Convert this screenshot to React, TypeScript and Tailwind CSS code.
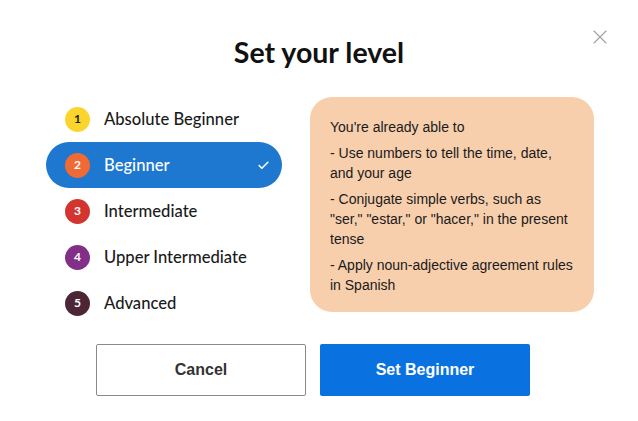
import { Check, X } from "lucide-react";

const levels = [
  { n: 1, name: "Absolute Beginner", color: "bg-[#fbd52e]", numColor: "text-[#222]" },
  { n: 2, name: "Beginner", color: "bg-[#f06a35]", numColor: "text-white" },
  { n: 3, name: "Intermediate", color: "bg-[#d2352f]", numColor: "text-white" },
  { n: 4, name: "Upper Intermediate", color: "bg-[#822f87]", numColor: "text-white" },
  { n: 5, name: "Advanced", color: "bg-[#4d2636]", numColor: "text-white" },
];

// lines kept as in the design
const skills = [
  ["- Use numbers to tell the time, date,", "and your age"],
  ['- Conjugate simple verbs, such as', '"ser," "estar," or "hacer," in the present', "tense"],
  ["- Apply noun-adjective agreement rules", "in Spanish"],
];

const selected = 2;

const App = () => {
  return (
    <div className="relative w-[638px] h-[421px] bg-white overflow-hidden">
      {/* close button */}
      <button className="absolute right-[26px] top-[25px] text-[#a0a0a0]">
        <X size={24} strokeWidth={1.1} />
      </button>

      <h1 className="pt-[34px] text-center text-[28.5px] leading-[36px] font-bold text-[#111] font-['Lato',sans-serif]">
        Set your level
      </h1>

      <div className="flex gap-[28px] pl-[46px] mt-[26px]">
        {/* level list */}
        <ul className="w-[236px] flex flex-col font-['Lato',sans-serif]">
          {levels.map((l) => {
            const active = l.n === selected;
            return (
              <li
                key={l.n}
                className={
                  active
                    ? "h-[46px] flex items-center pl-[19px] pr-[12px] rounded-full bg-[#1e78d0] text-white"
                    : "h-[46px] flex items-center pl-[19px] pr-[12px] text-[#1a1a1a]"
                }
              >
                <span
                  className={`w-[25px] h-[25px] rounded-full flex items-center justify-center text-[12px] font-bold ${l.color} ${l.numColor}`}
                >
                  {l.n}
                </span>
                <span className="ml-[14px] text-[16.6px] font-medium flex-1">{l.name}</span>
                {active && <Check size={13} strokeWidth={3} className="text-white" />}
              </li>
            );
          })}
        </ul>

        {/* description */}
        <div className="w-[284px] h-[215px] mt-[1px] rounded-[22px] bg-[#f7cfad] pl-[20px] pr-[14px] pt-[20px] text-[14px] leading-[20px] text-[#1a1a1a] font-['Liberation_Sans',Arial,sans-serif] flex flex-col gap-[6px]">
          <p>You're already able to</p>
          {skills.map((lines, i) => (
            <p key={i}>
              {lines.map((line) => (
                <span key={line} className="block whitespace-nowrap">
                  {line}
                </span>
              ))}
            </p>
          ))}
        </div>
      </div>

      <div className="flex gap-[14px] pl-[96px] mt-[18px] font-['Liberation_Sans',Arial,sans-serif]">
        <button className="w-[210px] h-[52px] border border-[#8a8a8a] rounded-[2px] bg-white text-[16px] font-bold text-[#333]">
          Cancel
        </button>
        <button className="w-[210px] h-[52px] rounded-[2px] bg-[#0a72e0] text-[16px] font-bold text-white">
          Set Beginner
        </button>
      </div>
    </div>
  );
};

export default App;
